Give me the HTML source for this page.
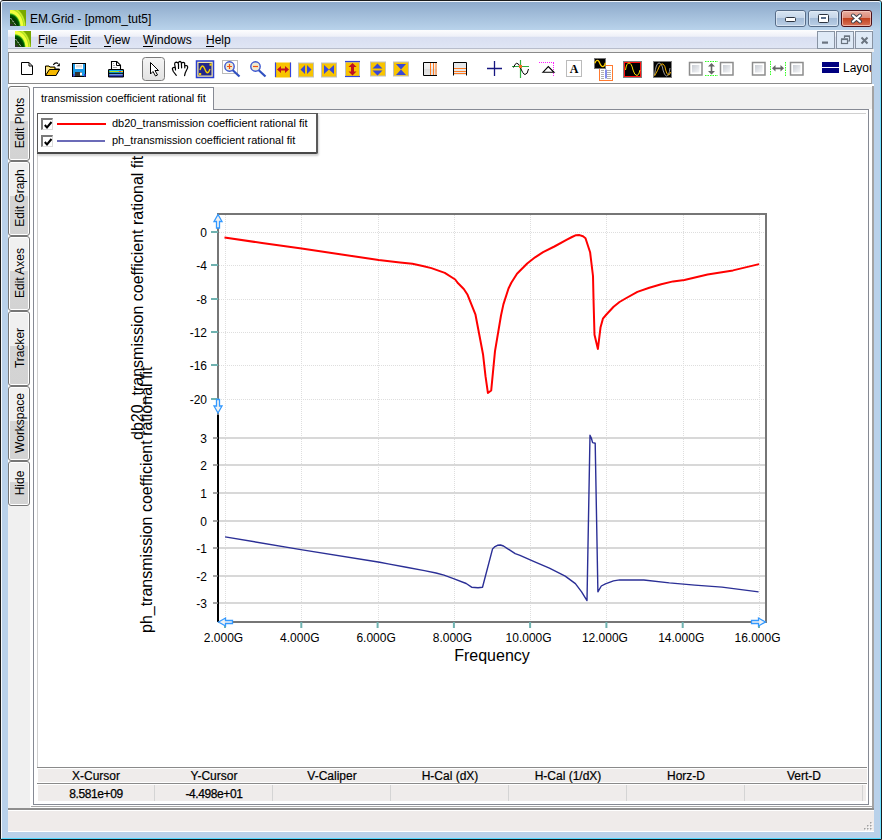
<!DOCTYPE html>
<html><head><meta charset="utf-8">
<style>
*{box-sizing:border-box;margin:0;padding:0}
html,body{width:882px;height:840px;overflow:hidden;background:#fff;font-family:"Liberation Sans",sans-serif;font-size:12px;color:#000}
.a{position:absolute}
#win{position:absolute;left:0;top:0;width:882px;height:840px;background:#b9d1ea;border:1px solid #1a1a1a;border-radius:3px 3px 0 0}
#winhl{position:absolute;left:1px;top:1px;width:880px;height:838px;border-left:1px solid #f4f8fc;border-right:1px solid #6ee0ff;border-bottom:1px solid #4fd8ff;border-radius:2px 2px 0 0}
#title{position:absolute;left:2px;top:1px;width:878px;height:29px;background:linear-gradient(#8eaacb,#b9d3eb);border-top:1px solid #f0f4f9;border-radius:2px 2px 0 0}
.tb{position:absolute;top:10px;height:17px;border:1px solid #5a6f8c;border-radius:3px;background:linear-gradient(#d3e1f0 0%,#c3d5ea 45%,#99b4d3 50%,#b5cbe3 100%)}
.tbx{background:linear-gradient(#e8a291 0%,#d87a63 45%,#c43c1c 50%,#d8735a 100%);border-color:#5a1e1e}
#menubar{position:absolute;left:8px;top:30px;width:865px;height:19px;background:linear-gradient(#fdfdfe 0%,#eef0f8 35%,#d9dff1 40%,#dfe5f4 100%);border-bottom:1px solid #b8bdcb}
.menu{position:absolute;top:4px;font-size:12px;color:#000}
.menu u{text-decoration:none;position:relative}.menu u:after{content:"";position:absolute;left:0;right:1px;bottom:0px;height:1px;background:#000}
.mdib{position:absolute;top:31px;height:18px;border:1px solid #b3bed0;background:linear-gradient(#f6f8fb,#dfe6f0)}
#gap{position:absolute;left:8px;top:49px;width:866px;height:3px;background:#f0f0f0}
#toolbar{position:absolute;left:8px;top:52px;width:864px;height:32px;background:#fff;border:1px solid #8a8a8a;border-right-color:#a0a0a0}
#client{position:absolute;left:8px;top:84px;width:866px;height:726px;background:#fff}
#side{position:absolute;left:8px;top:506px;width:22px;height:302px;background:#f0f0f0}
.stab{position:absolute;left:8px;width:22px;border:1px solid #767676;border-radius:3px;background:linear-gradient(180deg,#f0f0f0 0%,#f0f0f0 47%,#d5d5d5 47%,#d3d3d3 100%);box-shadow:inset 0 0 0 1px #fff}
.stab span{position:absolute;left:50%;top:50%;transform:translate(-50%,-50%) rotate(-90deg);margin-left:1px;margin-top:-1px;white-space:nowrap;font-size:12px}
#status{position:absolute;left:8px;top:810px;width:866px;height:22px;background:#efebea;border-top:1px solid #fff;border-bottom:1px solid #fff}
</style></head><body>
<div id="win"></div><div id="winhl"></div>
<div id="title"></div>
<!-- app icon -->
<svg class="a" style="left:10px;top:10px" width="16" height="16" viewBox="0 0 16 16">
<defs><radialGradient id="lg" gradientUnits="userSpaceOnUse" cx="0" cy="0" r="16" gradientTransform="translate(0,17) scale(1,1.3)"><stop offset="0" stop-color="#3a5a10"/><stop offset="0.25" stop-color="#1a4a08"/><stop offset="0.45" stop-color="#003800"/><stop offset="0.58" stop-color="#006000"/><stop offset="0.63" stop-color="#50c020"/><stop offset="0.68" stop-color="#f0ff40"/><stop offset="0.8" stop-color="#f4ff38"/><stop offset="0.86" stop-color="#a8e020"/><stop offset="0.92" stop-color="#d0f030"/><stop offset="1" stop-color="#78a800"/></radialGradient></defs>
<rect width="16" height="16" fill="url(#lg)"/><path d="M0.5,8 L6.5,16" stroke="#fff" stroke-width="1" stroke-dasharray="1,1"/><rect x="0" y="14" width="3" height="2" fill="#303030"/></svg>
<div class="a" style="left:30px;top:12px;font-size:12px;color:#000">EM.Grid - [pmom_tut5]</div>
<svg class="a" style="left:0;top:0" width="882" height="30" viewBox="0 0 882 30">
<defs>
<linearGradient id="tbg" x1="0" y1="0" x2="0" y2="1"><stop offset="0" stop-color="#d9e6f3"/><stop offset="0.45" stop-color="#c6d7ea"/><stop offset="0.5" stop-color="#a4bcd8"/><stop offset="1" stop-color="#bcd0e6"/></linearGradient>
<linearGradient id="tbx" x1="0" y1="0" x2="0" y2="1"><stop offset="0" stop-color="#eab2a4"/><stop offset="0.45" stop-color="#dd8c7a"/><stop offset="0.5" stop-color="#c2421f"/><stop offset="1" stop-color="#d9765c"/></linearGradient>
</defs>
<rect x="775.5" y="10.5" width="30" height="16" rx="2.5" fill="url(#tbg)" stroke="#566c88" stroke-width="1"/>
<rect x="776.5" y="11.5" width="28" height="14" rx="1.5" fill="none" stroke="#e6eef8" stroke-opacity="0.7" stroke-width="1"/>
<rect x="785.5" y="17.5" width="10" height="4" rx="1" fill="#fff" stroke="#2c3440" stroke-width="1"/>
<rect x="808.5" y="10.5" width="30" height="16" rx="2.5" fill="url(#tbg)" stroke="#566c88" stroke-width="1"/>
<rect x="809.5" y="11.5" width="28" height="14" rx="1.5" fill="none" stroke="#e6eef8" stroke-opacity="0.7" stroke-width="1"/>
<rect x="818.5" y="14.5" width="10" height="8" rx="1" fill="#fff" stroke="#2c3440" stroke-width="1"/>
<rect x="821" y="17" width="5" height="2" fill="#5a6e8a"/>
<rect x="841.5" y="10.5" width="30" height="16" rx="2.5" fill="url(#tbx)" stroke="#4a1018" stroke-width="1"/>
<rect x="842.5" y="11.5" width="28" height="14" rx="1.5" fill="none" stroke="#f8d0c8" stroke-opacity="0.7" stroke-width="1"/>
<path d="M853,15.5 L860,21.5 M860,15.5 L853,21.5" stroke="#3a3f4a" stroke-width="4" stroke-linecap="round"/>
<path d="M853,15.5 L860,21.5 M860,15.5 L853,21.5" stroke="#fff" stroke-width="2.2" stroke-linecap="round"/>
</svg>

<div id="menubar"></div>
<svg class="a" style="left:15px;top:31px" width="16" height="16" viewBox="0 0 16 16"><rect width="16" height="16" fill="url(#lg)"/><path d="M0.5,8 L6.5,16" stroke="#fff" stroke-width="1" stroke-dasharray="1,1"/><rect x="0" y="14" width="3" height="2" fill="#303030"/></svg>
<div class="menu" style="left:38px;top:33px"><u>F</u>ile</div>
<div class="menu" style="left:70px;top:33px"><u>E</u>dit</div>
<div class="menu" style="left:104px;top:33px"><u>V</u>iew</div>
<div class="menu" style="left:143px;top:33px"><u>W</u>indows</div>
<div class="menu" style="left:206px;top:33px"><u>H</u>elp</div>
<svg class="a" style="left:814px;top:30px" width="62" height="20" viewBox="814 30 62 20">
<rect x="817.5" y="31.5" width="17" height="17" fill="#dfeaf7" stroke="#8893a2" stroke-width="1"/>
<rect x="836.5" y="31.5" width="17" height="17" fill="#dfeaf7" stroke="#8893a2" stroke-width="1"/>
<rect x="855.5" y="31.5" width="17" height="17" fill="#dfeaf7" stroke="#8893a2" stroke-width="1"/>
<rect x="822" y="41.5" width="6" height="2.2" fill="#6a7480"/>
<rect x="841.5" y="39.5" width="6" height="4" fill="none" stroke="#6a7480" stroke-width="1.2"/><path d="M841,39 H848" stroke="#6a7480" stroke-width="1.5"/>
<path d="M844.5,38 V36 H849.5 V41 H848" fill="none" stroke="#6a7480" stroke-width="1.2"/><path d="M844,36.3 H850" stroke="#6a7480" stroke-width="1.4"/>
<path d="M861.5,37.5 L867.5,43.5 M867.5,37.5 L861.5,43.5" stroke="#6a7480" stroke-width="2"/>
</svg>
<div id="gap"></div>
<div id="toolbar"></div>
<!-- TOOLBAR ICONS -->
<svg class="a" style="left:0;top:0" width="882" height="90" viewBox="0 0 882 90">
<path d="M21.5,62.5 H29 L32.5,66 V74.5 H21.5 Z" fill="#fff" stroke="#000" stroke-width="1"/>
<path d="M29,62.5 V66 H32.5" fill="none" stroke="#000" stroke-width="1"/>
<path d="M45.5,66 H49 L50,67 H55 V69 H59.5 L56,75.5 H45.5 Z" fill="#f7c400" stroke="#000" stroke-width="1"/>
<path d="M46,67 H49 L50,68 H54 V69 H49 L46,74 Z" fill="#fbe58a"/>
<path d="M49.5,69.5 H59.5 L56,75.5 H45.5 Z" fill="#f5b800" stroke="#000" stroke-width="1"/>
<path d="M53.3,64.8 Q55.5,61.8 58.3,63.6" fill="none" stroke="#000" stroke-width="1.1"/><path d="M59.8,63 V66.3 H56.8 Z" fill="#000"/>
<rect x="72.5" y="63.5" width="13" height="13" fill="#1e9be8" stroke="#000" stroke-width="1"/>
<rect x="75" y="64" width="8" height="5" fill="#fff"/><rect x="76" y="65" width="6" height="2.5" fill="#ddd"/>
<rect x="75" y="72" width="7" height="4" fill="#333"/><rect x="80" y="72.5" width="2" height="3" fill="#fff"/>
<rect x="73" y="74" width="1.5" height="2.5" fill="#4040d0"/><rect x="84" y="74" width="1.5" height="2.5" fill="#4040d0"/>
<path d="M111.5,61.5 H116.8 L120.5,65.2 V69.5 H111.5 Z" fill="#fff" stroke="#000" stroke-width="1.1"/>
<path d="M116.5,61.8 V65.5 H120.2" fill="none" stroke="#000" stroke-width="1"/>
<rect x="113" y="63" width="1" height="1" fill="#aaa"/><rect x="113" y="65" width="2" height="1" fill="#aaa"/><rect x="113" y="67" width="4" height="1" fill="#aaa"/>
<rect x="108" y="69" width="16" height="8.5" rx="1.2" fill="#000"/>
<rect x="109.2" y="70" width="13.6" height="1" fill="#10b0f0"/><rect x="109.2" y="71" width="13.6" height="1.2" fill="#b0e020"/><rect x="119" y="71" width="2" height="1.2" fill="#ff3030"/><rect x="121" y="71" width="2" height="1.2" fill="#ffd000"/><rect x="109.2" y="72.2" width="13.6" height="1" fill="#10a8f0"/>
<rect x="109.2" y="74" width="13.6" height="1" fill="#7098d8"/><rect x="109.2" y="75" width="13.6" height="1" fill="#3848c0"/><rect x="109.2" y="76" width="13.6" height="0.8" fill="#101870"/>
<defs><linearGradient id="selg" x1="0" y1="0" x2="0" y2="1"><stop offset="0" stop-color="#f5f5f5"/><stop offset="1" stop-color="#e2e2e2"/></linearGradient>
<linearGradient id="cbg" x1="0" y1="0" x2="1" y2="1"><stop offset="0" stop-color="#c9cdd4"/><stop offset="1" stop-color="#f4f5f7"/></linearGradient></defs>
<rect x="142.5" y="57.5" width="22" height="23" rx="3" fill="url(#selg)" stroke="#7b7b7b" stroke-width="1"/>
<path d="M150.5,62.5 V74 L153,71.5 L155.5,76 L157.5,75 L155,70.5 H158.5 Z" fill="#fff" stroke="#000" stroke-width="1" stroke-linejoin="round"/>
<path d="M176.3,75.3 L173.3,71.5 L172.3,68.8 Q172.6,67.2 174.6,67.4 Q175.6,67.8 175.5,70 M175.5,68.5 L174.6,64 Q174.8,62.2 176.6,62.2 Q178.2,62.4 178.5,64 V68.5 M178.3,63 Q178.9,61.4 180,61.4 Q181.2,61.6 181.4,63.2 L181.6,67.8 M181.6,63 Q183.2,61.9 184.6,62.9 L184.8,67.8 M185.6,65.6 Q187.4,65.2 187.7,67 Q187.6,68.6 186.6,70 L185.2,73 L184.6,75.6" fill="none" stroke="#000" stroke-width="1.2" stroke-linejoin="round" stroke-linecap="round"/>
<rect x="196.5" y="61" width="17" height="16.5" fill="#f2e6a6" stroke="#2a3fd0" stroke-width="1.5"/>
<rect x="198.5" y="63" width="13" height="12.5" fill="#22278c"/>
<path d="M200,70 Q202.3,62.5 204.8,69 Q207.5,76.5 210,69" fill="none" stroke="#f5d000" stroke-width="1.3"/>
<rect x="199" y="73" width="2.2" height="2.2" fill="#f5d000"/><rect x="209.5" y="63.5" width="2.2" height="2.2" fill="#f5d000"/>
<rect x="222.5" y="60.5" width="15" height="13" fill="none" stroke="#bbb" stroke-width="1"/>
<line x1="232.5" y1="70" x2="239.5" y2="76.5" stroke="#3050c0" stroke-width="2.2"/>
<circle cx="229.5" cy="66.5" r="4.7" fill="#f0ead0" stroke="#3c56d0" stroke-width="1.4"/>
<path d="M227,66.5 H232 M229.5,64 V69" stroke="#f05010" stroke-width="1.2"/>
<line x1="258.5" y1="70" x2="265.5" y2="76.5" stroke="#3050c0" stroke-width="2.2"/>
<circle cx="255.5" cy="66.5" r="4.7" fill="#f0ead0" stroke="#3c56d0" stroke-width="1.4"/>
<path d="M253,66.5 H258" stroke="#f05010" stroke-width="1.2"/>
<rect x="275.5" y="63.0" width="15" height="14" fill="#f8c400" stroke="#f8c400" stroke-width="1"/>
<line x1="275.5" y1="62.5" x2="275.5" y2="77" stroke="#3344dd" stroke-width="1.2"/><line x1="290.5" y1="62.5" x2="290.5" y2="77" stroke="#3344dd" stroke-width="1.2"/>
<path d="M277,69.5 L281,66 V68.5 H285 V66 L289,69.5 L285,73 V70.5 H281 V73 Z" fill="#c01020"/>
<rect x="298.5" y="63.0" width="15" height="14" fill="#f8c400" stroke="#c0c0c0" stroke-width="1"/>
<path d="M300.5,69.5 L305,65 V74 Z M311.5,69.5 L307,65 V74 Z" fill="#3848d8"/>
<rect x="321.5" y="63.0" width="15" height="14" fill="#f8c400" stroke="#c0c0c0" stroke-width="1"/>
<path d="M324,65 L329,69.5 L324,74 Z M334,65 L329,69.5 L334,74 Z" fill="#3848d8"/>
<rect x="345.5" y="62" width="14" height="14.5" fill="#f8c400" stroke="#c0c0c0" stroke-width="1"/>
<line x1="345" y1="61.5" x2="360" y2="61.5" stroke="#3344dd" stroke-width="1.2"/><line x1="345" y1="76.5" x2="360" y2="76.5" stroke="#3344dd" stroke-width="1.2"/>
<path d="M352.5,63 L356.5,67 H354 V71.5 H356.5 L352.5,75.5 L348.5,71.5 H351 V67 H348.5 Z" fill="#c01020"/>
<rect x="370.5" y="62.0" width="15" height="14" fill="#f8c400" stroke="#c0c0c0" stroke-width="1"/>
<path d="M372.5,68.5 L377.5,63.5 L382.5,68.5 Z M372.5,70.5 L377.5,75.5 L382.5,70.5 Z" fill="#3848d8"/>
<rect x="393.5" y="62.0" width="15" height="14" fill="#f8c400" stroke="#c0c0c0" stroke-width="1"/>
<path d="M396,64 H406 L401,69.5 Z M396,75 H406 L401,69.5 Z" fill="#3848d8"/>
<defs><linearGradient id="bg2" x1="0" y1="0" x2="0" y2="1"><stop offset="0" stop-color="#f4f4f4"/><stop offset="0.5" stop-color="#eaeaea"/><stop offset="0.5" stop-color="#dcdcdc"/><stop offset="1" stop-color="#e6e6e6"/></linearGradient></defs>
<rect x="424" y="63" width="13" height="12" fill="url(#bg2)"/>
<path d="M437,62.5 H423.5 V75.5 H437" fill="none" stroke="#000" stroke-width="1"/>
<path d="M430.5,63 V75 M433.5,63 V75 M436,63 V75" stroke="#ff7a20" stroke-width="1"/>
<rect x="454" y="63" width="13" height="12" fill="#e6e8ea"/>
<path d="M453.5,75.5 V62.5 H466.5 V75.5" fill="none" stroke="#000" stroke-width="1"/>
<path d="M454,68.5 H466 M454,71.5 H466 M454,73.5 H466" stroke="#ff7a20" stroke-width="1"/>
<path d="M487,68.5 H502 M494.5,61 V76" stroke="#161680" stroke-width="1.3"/>
<path d="M512,66.5 H529 M520.5,60 V78" stroke="#30b040" stroke-width="1.2"/>
<path d="M513.5,67.5 Q516.5,59.5 520,66.5 Q523,74.5 525,74.5 Q527.5,74.5 528.5,69" fill="none" stroke="#000" stroke-width="1"/>
<rect x="519" y="65" width="3" height="3" fill="#f07020"/>
<path d="M539,62.5 H554 M553.5,62.5 V77" stroke="#ff20ff" stroke-width="1" stroke-dasharray="1,1" shape-rendering="crispEdges"/>
<path d="M542.8,72.3 L548.3,66.6 L554,72.3 Z" fill="none" stroke="#000" stroke-width="1.1"/>
<rect x="566.5" y="60.5" width="15" height="16" fill="#fff" stroke="#bbb" stroke-width="1"/>
<text x="574" y="73" text-anchor="middle" font-family="Liberation Serif" font-weight="bold" font-size="12" fill="#000">A</text>
<rect x="599.5" y="65.5" width="13" height="15" fill="#fff" stroke="#ff7a30" stroke-width="1"/>
<path d="M601,70.5 H604 M601,72.5 H604 M601,74.5 H604 M601,76.5 H604 M601,78.5 H604 M607,70.5 H611 M607,72.5 H611 M607,74.5 H611 M607,76.5 H611 M607,78.5 H611" stroke="#b0b0b0" stroke-width="1" shape-rendering="crispEdges"/>
<line x1="606" y1="69.5" x2="606" y2="78.5" stroke="#3040e0" stroke-width="1.2"/>
<rect x="594.5" y="58.5" width="11" height="10" fill="#000" stroke="#777" stroke-width="1"/>
<path d="M594.8,63.3 Q596.5,58.6 599,61.5 Q601,66.8 603,66.6 Q605,66.2 605.3,62.8" fill="none" stroke="#ffd000" stroke-width="1.3"/>
<rect x="623.5" y="61.5" width="18" height="16" fill="#000" stroke="#808080" stroke-width="1"/>
<rect x="624.5" y="62.5" width="16" height="14" fill="none" stroke="#ff1010" stroke-width="1" shape-rendering="crispEdges"/>
<path d="M625.5,70 Q626.5,63 629,63 Q631.5,63 633,70 Q634.5,75.5 637,75.5 Q639,75.5 640,70" fill="none" stroke="#ffe000" stroke-width="1"/>
<rect x="653.5" y="61.5" width="18" height="16" fill="#000" stroke="#808080" stroke-width="1"/>
<path d="M654.5,75 Q656,63 659,63 Q662,63 663,70 Q664.5,76 666.5,76 Q669,76 670,68" fill="none" stroke="#999" stroke-width="1"/>
<path d="M654.5,76 Q658,70 659.5,66 Q661.5,63 663,64 Q665,65 666,71 Q667.5,76 669.5,74.5 L670.5,72" fill="none" stroke="#f0b000" stroke-width="1"/>
<rect x="689.5" y="62.5" width="12.5" height="12.5" fill="#fff" stroke="#8c8c8c" stroke-width="1.5"/><rect x="692" y="65" width="7.5" height="7.5" fill="url(#cbg)"/>
<rect x="720.5" y="62.5" width="12.5" height="12.5" fill="#fff" stroke="#8c8c8c" stroke-width="1.5"/><rect x="723" y="65" width="7.5" height="7.5" fill="url(#cbg)"/>
<rect x="752.5" y="62.5" width="12.5" height="12.5" fill="#fff" stroke="#8c8c8c" stroke-width="1.5"/><rect x="755" y="65" width="7.5" height="7.5" fill="url(#cbg)"/>
<rect x="790.5" y="62.5" width="12.5" height="12.5" fill="#fff" stroke="#8c8c8c" stroke-width="1.5"/><rect x="793" y="65" width="7.5" height="7.5" fill="url(#cbg)"/>
<path d="M705,61.5 H718 M705,75.5 H718" stroke="#30ff20" stroke-width="1" stroke-dasharray="1.5,1"/>
<path d="M711.5,63 L715,66.5 H712.3 V71 H715 L711.5,74.5 L708,71 H710.7 V66.5 H708 Z" fill="#666"/>
<path d="M770.5,61 V76 M785.5,62 V76" stroke="#30ff20" stroke-width="1" stroke-dasharray="1.5,1"/>
<path d="M772,68.3 L775.5,65 V67.5 H780.5 V65 L784,68.3 L780.5,71.5 V69.2 H775.5 V71.5 Z" fill="#666"/>
<rect x="822" y="62" width="17" height="5" fill="#000080"/><rect x="822" y="68" width="17" height="5" fill="#000080"/>
</svg>
<div class="a" style="left:843px;top:61px;width:28px;overflow:hidden;font-size:12px;white-space:nowrap">Layout</div>

<div id="client"></div>
<div id="side"></div>
<div class="stab" style="top:86px;height:75px"><span>Edit Plots</span></div>
<div class="stab" style="top:161px;height:75px"><span>Edit Graph</span></div>
<div class="stab" style="top:236px;height:75px"><span>Edit Axes</span></div>
<div class="stab" style="top:311px;height:75px"><span>Tracker</span></div>
<div class="stab" style="top:386px;height:75px"><span>Workspace</span></div>
<div class="stab" style="top:461px;height:45px"><span>Hide</span></div>

<!-- frame -->
<div class="a" style="left:214px;top:87px;width:658px;height:22px;background:#f0f0f0"></div>
<div class="a" style="left:33px;top:109px;width:836px;height:696px;border:1px solid #868a94;background:#fff"></div>
<div class="a" style="left:33px;top:87px;width:181px;height:23px;border:1px solid #868a94;border-bottom:none;background:#fff"></div>
<div class="a" style="left:41px;top:92px;font-size:11px">transmission coefficient rational fit</div>
<div class="a" style="left:37px;top:113px;width:829px;height:654px;border-left:1px solid #d0d0d0;border-top:1px solid #d0d0d0"></div>
<div class="a" style="left:872px;top:86px;width:2px;height:724px;background:#a3a3a3"></div>
<div class="a" style="left:31px;top:806px;width:841px;height:1px;background:#a8a8a8"></div>
<div class="a" style="left:8px;top:808px;width:866px;height:2px;background:#8e8e8e"></div>
<svg class="a" style="left:0;top:0" width="882" height="840" viewBox="0 0 882 840">
<line x1="225.5" y1="215" x2="225.5" y2="621" stroke="#dedede" stroke-width="1" stroke-dasharray="1,1" shape-rendering="crispEdges"/>
<line x1="301.5" y1="215" x2="301.5" y2="621" stroke="#dedede" stroke-width="1" stroke-dasharray="1,1" shape-rendering="crispEdges"/>
<line x1="378.5" y1="215" x2="378.5" y2="621" stroke="#dedede" stroke-width="1" stroke-dasharray="1,1" shape-rendering="crispEdges"/>
<line x1="454.5" y1="215" x2="454.5" y2="621" stroke="#dedede" stroke-width="1" stroke-dasharray="1,1" shape-rendering="crispEdges"/>
<line x1="530.5" y1="215" x2="530.5" y2="621" stroke="#dedede" stroke-width="1" stroke-dasharray="1,1" shape-rendering="crispEdges"/>
<line x1="606.5" y1="215" x2="606.5" y2="621" stroke="#dedede" stroke-width="1" stroke-dasharray="1,1" shape-rendering="crispEdges"/>
<line x1="683.5" y1="215" x2="683.5" y2="621" stroke="#dedede" stroke-width="1" stroke-dasharray="1,1" shape-rendering="crispEdges"/>
<line x1="759.5" y1="215" x2="759.5" y2="621" stroke="#dedede" stroke-width="1" stroke-dasharray="1,1" shape-rendering="crispEdges"/>
<line x1="219" y1="232.5" x2="765" y2="232.5" stroke="#dedede" stroke-width="1" stroke-dasharray="1,1" shape-rendering="crispEdges"/>
<line x1="219" y1="265.5" x2="765" y2="265.5" stroke="#dedede" stroke-width="1" stroke-dasharray="1,1" shape-rendering="crispEdges"/>
<line x1="219" y1="299.5" x2="765" y2="299.5" stroke="#dedede" stroke-width="1" stroke-dasharray="1,1" shape-rendering="crispEdges"/>
<line x1="219" y1="332.5" x2="765" y2="332.5" stroke="#dedede" stroke-width="1" stroke-dasharray="1,1" shape-rendering="crispEdges"/>
<line x1="219" y1="365.5" x2="765" y2="365.5" stroke="#dedede" stroke-width="1" stroke-dasharray="1,1" shape-rendering="crispEdges"/>
<line x1="219" y1="399.5" x2="765" y2="399.5" stroke="#dedede" stroke-width="1" stroke-dasharray="1,1" shape-rendering="crispEdges"/>
<line x1="219" y1="438.0" x2="765" y2="438.0" stroke="#d8d8d8" stroke-width="2" shape-rendering="crispEdges"/>
<line x1="219" y1="465.0" x2="765" y2="465.0" stroke="#d8d8d8" stroke-width="2" shape-rendering="crispEdges"/>
<line x1="219" y1="493.0" x2="765" y2="493.0" stroke="#d8d8d8" stroke-width="2" shape-rendering="crispEdges"/>
<line x1="219" y1="521.0" x2="765" y2="521.0" stroke="#d8d8d8" stroke-width="2" shape-rendering="crispEdges"/>
<line x1="219" y1="548.0" x2="765" y2="548.0" stroke="#d8d8d8" stroke-width="2" shape-rendering="crispEdges"/>
<line x1="219" y1="576.0" x2="765" y2="576.0" stroke="#d8d8d8" stroke-width="2" shape-rendering="crispEdges"/>
<line x1="219" y1="603.0" x2="765" y2="603.0" stroke="#d8d8d8" stroke-width="2" shape-rendering="crispEdges"/>
<path d="M218,214 H766 V622 H218" fill="none" stroke="#767676" stroke-width="2"/>
<line x1="218" y1="213" x2="218" y2="415" stroke="#767676" stroke-width="2"/>
<line x1="218" y1="415" x2="218" y2="622" stroke="#000" stroke-width="2"/>
<line x1="211" y1="232.0" x2="218" y2="232.0" stroke="#6fb2b0" stroke-width="2"/>
<line x1="211" y1="265.0" x2="218" y2="265.0" stroke="#6fb2b0" stroke-width="2"/>
<line x1="211" y1="299.0" x2="218" y2="299.0" stroke="#6fb2b0" stroke-width="2"/>
<line x1="211" y1="332.0" x2="218" y2="332.0" stroke="#6fb2b0" stroke-width="2"/>
<line x1="211" y1="365.0" x2="218" y2="365.0" stroke="#6fb2b0" stroke-width="2"/>
<line x1="211" y1="399.0" x2="218" y2="399.0" stroke="#6fb2b0" stroke-width="2"/>
<line x1="213" y1="438.0" x2="218" y2="438.0" stroke="#888" stroke-width="1.5"/>
<line x1="213" y1="465.0" x2="218" y2="465.0" stroke="#888" stroke-width="1.5"/>
<line x1="213" y1="493.0" x2="218" y2="493.0" stroke="#888" stroke-width="1.5"/>
<line x1="213" y1="521.0" x2="218" y2="521.0" stroke="#888" stroke-width="1.5"/>
<line x1="213" y1="548.0" x2="218" y2="548.0" stroke="#888" stroke-width="1.5"/>
<line x1="213" y1="576.0" x2="218" y2="576.0" stroke="#888" stroke-width="1.5"/>
<line x1="213" y1="603.0" x2="218" y2="603.0" stroke="#888" stroke-width="1.5"/>
<line x1="225.0" y1="622" x2="225.0" y2="628" stroke="#6fb2b0" stroke-width="2"/>
<line x1="301.3" y1="622" x2="301.3" y2="628" stroke="#6fb2b0" stroke-width="2"/>
<line x1="377.6" y1="622" x2="377.6" y2="628" stroke="#6fb2b0" stroke-width="2"/>
<line x1="453.9" y1="622" x2="453.9" y2="628" stroke="#6fb2b0" stroke-width="2"/>
<line x1="530.1" y1="622" x2="530.1" y2="628" stroke="#6fb2b0" stroke-width="2"/>
<line x1="606.4" y1="622" x2="606.4" y2="628" stroke="#6fb2b0" stroke-width="2"/>
<line x1="682.7" y1="622" x2="682.7" y2="628" stroke="#6fb2b0" stroke-width="2"/>
<line x1="759.0" y1="622" x2="759.0" y2="628" stroke="#6fb2b0" stroke-width="2"/>
<polyline points="224.5,237.5 262.0,243.0 301.6,248.4 340.0,254.2 378.7,260.1 400.0,262.4 412.4,263.8 423.8,266.2 431.4,268.1 444.8,272.9 455.2,279.5 458.1,283.3 463.8,289.0 467.6,294.8 475.4,314.3 479.5,335.7 483.1,354.8 485.5,376.2 487.9,392.9 491.2,390.5 495.0,351.2 501.0,315.5 503.4,304.4 508.5,288.5 511.3,282.8 517.0,273.8 527.2,263.5 535.1,257.3 543.1,252.2 554.4,246.5 566.9,239.7 572.0,237.0 576.0,235.2 579.5,235.1 583.0,236.3 585.5,238.2 590.1,252.2 593.0,276.0 593.6,302.6 594.5,334.8 597.9,349.0 600.5,327.6 602.9,318.7 606.4,314.5 613.6,306.8 619.5,302.0 625.5,298.5 637.4,291.9 649.3,287.7 661.2,284.2 673.1,281.4 684.4,280.0 707.6,274.5 733.0,270.4 759.1,264.1" fill="none" stroke="#ff0000" stroke-width="2" stroke-linejoin="round"/>
<polyline points="225.1,536.9 300.8,549.6 379.7,562.3 388.1,563.9 406.3,567.2 424.4,570.6 436.0,573.0 444.0,575.2 453.5,578.6 466.2,583.5 471.6,587.2 478.0,587.8 482.5,587.2 492.5,549.1 495.0,546.6 497.5,545.3 500.5,545.0 503.5,546.0 507.0,548.3 515.2,553.6 520.0,555.3 533.6,561.4 549.4,568.2 565.2,576.1 575.4,583.6 581.6,591.8 587.0,600.6 590.0,435.2 591.4,438.3 592.6,442.6 595.2,443.3 597.9,591.8 601.3,586.0 605.4,583.9 613.5,580.9 619.7,579.9 643.8,580.0 669.3,582.9 694.8,585.1 722.0,587.1 758.6,591.9" fill="none" stroke="#2b2f96" stroke-width="1.4" stroke-linejoin="round"/>
<path d="M218,214.5 L222,221.5 H219.5 V228 H216.5 V221.5 H214 Z" fill="#f2f2f2" stroke="#3399ff" stroke-width="1.3"/>
<path d="M218,413 L222,406 H219.5 V399.5 H216.5 V406 H214 Z" fill="#f2f2f2" stroke="#3399ff" stroke-width="1.3"/>
<path d="M218.5,622 L225.5,618 V620.5 H232.5 V623.5 H225.5 V626 Z" fill="#f2f2f2" stroke="#3399ff" stroke-width="1.3"/>
<path d="M765.5,622 L758.5,618 V620.5 H751.5 V623.5 H758.5 V626 Z" fill="#f2f2f2" stroke="#3399ff" stroke-width="1.3"/>
<text x="207" y="236.5" text-anchor="end" font-family="Liberation Sans" font-size="12">0</text>
<text x="207" y="269.5" text-anchor="end" font-family="Liberation Sans" font-size="12">-4</text>
<text x="207" y="303.5" text-anchor="end" font-family="Liberation Sans" font-size="12">-8</text>
<text x="207" y="336.5" text-anchor="end" font-family="Liberation Sans" font-size="12">-12</text>
<text x="207" y="369.5" text-anchor="end" font-family="Liberation Sans" font-size="12">-16</text>
<text x="207" y="403.5" text-anchor="end" font-family="Liberation Sans" font-size="12">-20</text>
<text x="207" y="442.5" text-anchor="end" font-family="Liberation Sans" font-size="12">3</text>
<text x="207" y="469.5" text-anchor="end" font-family="Liberation Sans" font-size="12">2</text>
<text x="207" y="497.5" text-anchor="end" font-family="Liberation Sans" font-size="12">1</text>
<text x="207" y="525.5" text-anchor="end" font-family="Liberation Sans" font-size="12">0</text>
<text x="207" y="552.5" text-anchor="end" font-family="Liberation Sans" font-size="12">-1</text>
<text x="207" y="580.5" text-anchor="end" font-family="Liberation Sans" font-size="12">-2</text>
<text x="207" y="607.5" text-anchor="end" font-family="Liberation Sans" font-size="12">-3</text>
<text x="223.5" y="642" text-anchor="middle" font-family="Liberation Sans" font-size="12">2.000G</text>
<text x="299.8" y="642" text-anchor="middle" font-family="Liberation Sans" font-size="12">4.000G</text>
<text x="376.1" y="642" text-anchor="middle" font-family="Liberation Sans" font-size="12">6.000G</text>
<text x="452.4" y="642" text-anchor="middle" font-family="Liberation Sans" font-size="12">8.000G</text>
<text x="528.6" y="642" text-anchor="middle" font-family="Liberation Sans" font-size="12">10.000G</text>
<text x="604.9" y="642" text-anchor="middle" font-family="Liberation Sans" font-size="12">12.000G</text>
<text x="681.2" y="642" text-anchor="middle" font-family="Liberation Sans" font-size="12">14.000G</text>
<text x="757.5" y="642" text-anchor="middle" font-family="Liberation Sans" font-size="12">16.000G</text>
<text x="492" y="661" text-anchor="middle" font-family="Liberation Sans" font-size="16">Frequency</text>
<text transform="translate(143,440) rotate(-90)" font-family="Liberation Sans" font-size="16">db20_transmission coefficient rational fit</text>
<text transform="translate(152,633) rotate(-90)" font-family="Liberation Sans" font-size="16">ph_transmission coefficient rational fit</text>
</svg>
<!-- legend -->
<div class="a" style="left:37px;top:113px;width:281px;height:41px;background:#fff;border:1px solid #5a5a5a;border-right:2px solid #5a5a5a;border-bottom:2px solid #484848;border-radius:0 0 2px 0;box-shadow:1px 2px 2px rgba(0,0,0,0.18)"></div>
<div class="a" style="left:41px;top:118px;width:12px;height:12px;border:1px solid #dcdcdc;border-left:2px solid #7a7a7a;border-top:2px solid #7a7a7a;background:#fff"><svg class="a" style="left:1px;top:1px" width="9" height="9" viewBox="0 0 9 9"><path d="M0.8,4 L3,6.5 L7.5,1" fill="none" stroke="#000" stroke-width="2"/></svg></div>
<div class="a" style="left:41px;top:135px;width:12px;height:12px;border:1px solid #dcdcdc;border-left:2px solid #7a7a7a;border-top:2px solid #7a7a7a;background:#fff"><svg class="a" style="left:1px;top:1px" width="9" height="9" viewBox="0 0 9 9"><path d="M0.8,4 L3,6.5 L7.5,1" fill="none" stroke="#000" stroke-width="2"/></svg></div>
<div class="a" style="left:57px;top:123px;width:49px;height:2px;background:#ff0000"></div>
<div class="a" style="left:57px;top:140px;width:48px;height:2px;background:#6b6bb8"></div>
<div class="a" style="left:112px;top:117px;font-size:11px">db20_transmission coefficient rational fit</div>
<div class="a" style="left:112px;top:134px;font-size:11px">ph_transmission coefficient rational fit</div>
<!-- table -->
<div class="a" style="left:37px;top:767px;width:830px;height:1px;background:#8a8a8a"></div>
<div class="a" style="left:38px;top:769px;width:829px;height:13px;background:#efeceb"></div>
<div class="a" style="left:37px;top:783px;width:830px;height:1px;background:#8a8a8a"></div>
<div class="a" style="left:38px;top:785px;width:828px;height:16px;background:#efeceb"></div>
<div class="a" style="left:37px;top:769px;width:118px;text-align:center;font-size:12px;line-height:15px;-webkit-text-stroke:0.2px #000">X-Cursor</div>
<div class="a" style="left:37px;top:786px;width:118px;text-align:center;font-size:12px;line-height:16px;letter-spacing:-0.4px;-webkit-text-stroke:0.25px #000">8.581e+09</div>
<div class="a" style="left:154px;top:785px;width:1px;height:16px;background:#d4d4d4"></div>
<div class="a" style="left:155px;top:769px;width:118px;text-align:center;font-size:12px;line-height:15px;-webkit-text-stroke:0.2px #000">Y-Cursor</div>
<div class="a" style="left:155px;top:786px;width:118px;text-align:center;font-size:12px;line-height:16px;letter-spacing:-0.4px;-webkit-text-stroke:0.25px #000">-4.498e+01</div>
<div class="a" style="left:272px;top:785px;width:1px;height:16px;background:#d4d4d4"></div>
<div class="a" style="left:273px;top:769px;width:118px;text-align:center;font-size:12px;line-height:15px;-webkit-text-stroke:0.2px #000">V-Caliper</div>
<div class="a" style="left:390px;top:785px;width:1px;height:16px;background:#d4d4d4"></div>
<div class="a" style="left:391px;top:769px;width:118px;text-align:center;font-size:12px;line-height:15px;-webkit-text-stroke:0.2px #000">H-Cal (dX)</div>
<div class="a" style="left:508px;top:785px;width:1px;height:16px;background:#d4d4d4"></div>
<div class="a" style="left:509px;top:769px;width:118px;text-align:center;font-size:12px;line-height:15px;-webkit-text-stroke:0.2px #000">H-Cal (1/dX)</div>
<div class="a" style="left:626px;top:785px;width:1px;height:16px;background:#d4d4d4"></div>
<div class="a" style="left:627px;top:769px;width:118px;text-align:center;font-size:12px;line-height:15px;-webkit-text-stroke:0.2px #000">Horz-D</div>
<div class="a" style="left:744px;top:785px;width:1px;height:16px;background:#d4d4d4"></div>
<div class="a" style="left:745px;top:769px;width:118px;text-align:center;font-size:12px;line-height:15px;-webkit-text-stroke:0.2px #000">Vert-D</div>
<div class="a" style="left:862px;top:785px;width:1px;height:16px;background:#d4d4d4"></div>


<div id="status"></div>
<svg class="a" style="left:860px;top:818px" width="16" height="14" viewBox="860 818 16 14"><rect x="871" y="823" width="1.5" height="1.5" fill="#fff"/><rect x="870" y="822" width="1.5" height="1.5" fill="#a0a0a0"/><rect x="868" y="826" width="1.5" height="1.5" fill="#fff"/><rect x="867" y="825" width="1.5" height="1.5" fill="#a0a0a0"/><rect x="871" y="826" width="1.5" height="1.5" fill="#fff"/><rect x="870" y="825" width="1.5" height="1.5" fill="#a0a0a0"/><rect x="865" y="829" width="1.5" height="1.5" fill="#fff"/><rect x="864" y="828" width="1.5" height="1.5" fill="#a0a0a0"/><rect x="868" y="829" width="1.5" height="1.5" fill="#fff"/><rect x="867" y="828" width="1.5" height="1.5" fill="#a0a0a0"/><rect x="871" y="829" width="1.5" height="1.5" fill="#fff"/><rect x="870" y="828" width="1.5" height="1.5" fill="#a0a0a0"/></svg>
</body></html>
